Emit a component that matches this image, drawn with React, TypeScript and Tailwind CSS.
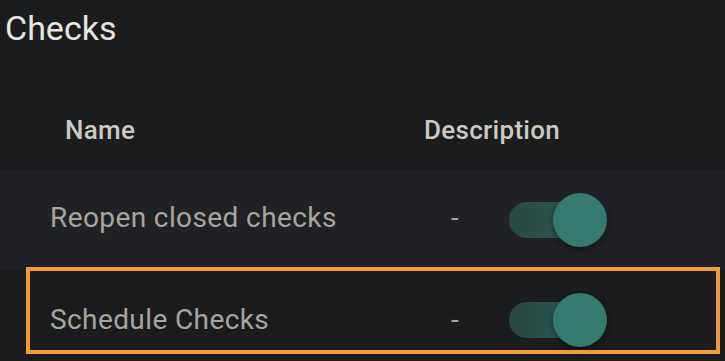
import React from 'react';

interface Check {
  name: string;
  description: string;
  enabled: boolean;
}

const checks: Check[] = [
  { name: 'Reopen closed checks', description: '-', enabled: true },
  { name: 'Schedule Checks', description: '-', enabled: true },
];

function Toggle({ on }: { on: boolean }) {
  return (
    <div className="relative w-[98px] h-[54px] flex items-center">
      <div className="w-[90px] h-[36px] rounded-full bg-gradient-to-r from-[#284842] to-[#2f5f56]" />
      <div
        className={`absolute top-0 ${on ? 'left-[44px]' : 'left-0'} w-[54px] h-[54px] rounded-full bg-[#347a6e] shadow-[0_2px_6px_rgba(0,0,0,0.45)]`}
      />
    </div>
  );
}

export default function App() {
  return (
    <div className="relative w-[725px] h-[361px] overflow-hidden bg-[#1b1c1e] font-['Roboto',sans-serif]">
      <h1 className="pl-[5px] pt-[8px] text-[34px] leading-[40px] text-[#e8e6e2] h-[90px]">Checks</h1>

      <div className="flex items-center h-[80px] text-[26px] leading-[30px] font-medium tracking-[0.3px] text-[#cdc9c2]">
        <div className="w-[424px] pl-[65px]">Name</div>
        <div>Description</div>
      </div>

      {checks.map((c, i) => (
        <div
          key={c.name}
          className={`flex items-center h-[100px] ${i === 0 ? 'bg-[#202124]' : ''}`}
        >
          <div className={`w-[451px] pl-[50px] text-[28px] leading-[32px] tracking-[0.4px] text-[#a9a59e] ${i === 0 ? 'pb-[5px]' : ''}`}>
            {c.name}
          </div>
          <div className={`w-[58px] text-[28px] leading-[32px] text-[#a9a59e] ${i === 0 ? 'pb-[5px]' : ''}`}>{c.description}</div>
          <Toggle on={c.enabled} />
        </div>
      ))}

      <div className="absolute left-[26px] top-[267px] w-[694px] h-[87px] border-[4px] border-[#f09a3a] pointer-events-none" />
    </div>
  );
}
